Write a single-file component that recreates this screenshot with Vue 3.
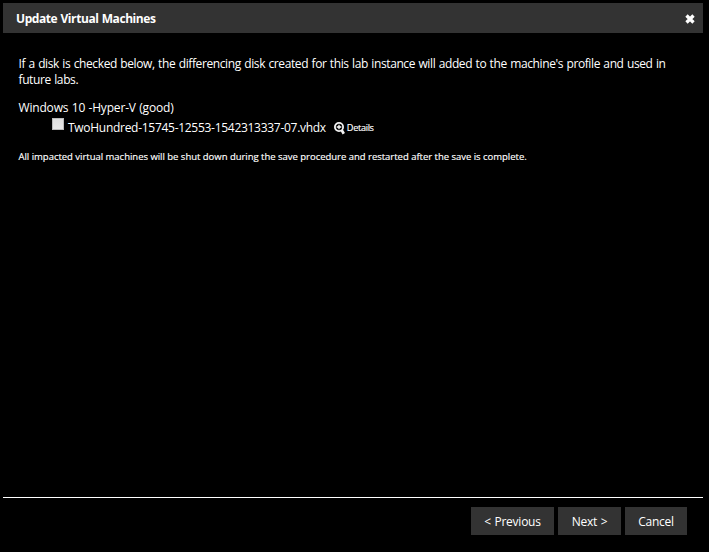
<script setup>
import { ref } from 'vue'

const checked = ref(false)
</script>

<template>
  <main class="dialog">
    <header class="titlebar">
      <h1 class="title">Update Virtual Machines</h1>
      <button class="close" aria-label="Close">
        <svg width="10" height="10" viewBox="0 0 10 10">
          <path d="M1.5 1.5 8.5 8.5M8.5 1.5 1.5 8.5" fill="none" stroke="#fff" stroke-width="3.3" />
        </svg>
      </button>
    </header>
    <section class="content">
      <p class="intro">If a disk is checked below, the differencing disk created for this lab instance will added to the machine's profile and used in<br />future labs.</p>
      <div class="machine">Windows 10 -Hyper-V (good)</div>
      <div class="disk">
        <input v-model="checked" class="check" type="checkbox" aria-label="Save disk" />
        <span class="filename">TwoHundred-15745-12553-1542313337-07.vhdx</span>
        <a class="details">
          <svg width="12" height="13" viewBox="0 0 12 13">
            <circle cx="5" cy="5" r="4.1" fill="none" stroke="#f2f2f2" stroke-width="1.8" />
            <path d="M5 2.7V7.3M2.7 5H7.3" stroke="#fff" stroke-width="1.3" />
            <path d="M7.6 8 9.8 11.8" stroke="#f2f2f2" stroke-width="2.7" />
          </svg>
          <span class="details-text">Details</span>
        </a>
      </div>
      <p class="note">All impacted virtual machines will be shut down during the save procedure and restarted after the save is complete.</p>
    </section>
    <footer class="footer">
      <button class="btn previous">&lt; Previous</button>
      <button class="btn next">Next &gt;</button>
      <button class="btn cancel">Cancel</button>
    </footer>
  </main>
</template>

<style>
body {
  background: #000;
}
</style>

<style scoped>
.dialog {
  box-sizing: border-box;
  height: 552px;
  padding: 3px 6px 0 3px;
  display: flex;
  flex-direction: column;
  overflow: hidden;
  background: #000;
  color: #fff;
  font: 12px/16px "Open Sans", "Noto Sans", sans-serif;
  white-space: nowrap;
}
.titlebar {
  height: 30px;
  box-sizing: border-box;
  padding: 0 8px 0 13px;
  display: flex;
  align-items: center;
  justify-content: space-between;
  background: #333;
}
.title {
  margin: 0;
  padding-top: 2px;
  font-size: 12px;
  font-weight: 700;
  letter-spacing: -0.42px;
  word-spacing: 0.5px;
}
.close {
  display: flex;
  padding: 1px 0 0;
  border: 0;
  background: none;
}
.content {
  flex: 1;
  padding: 23px 15px 0;
}
.intro {
  margin: 0 0 12px;
  padding-left: 0.5px;
  letter-spacing: -0.39px;
  word-spacing: 0.65px;
}
.machine {
  padding-left: 0.5px;
  letter-spacing: -0.18px;
  word-spacing: 0.5px;
}
.disk {
  height: 22px;
  padding-left: 34px;
  display: flex;
  align-items: center;
}
.check {
  appearance: none;
  box-sizing: border-box;
  width: 12px;
  height: 12px;
  margin: 0 4px 6px 0;
  border: 1px solid #bababa;
  background: linear-gradient(#dedede, #e8e8e8);
}
.check:checked {
  background: #555;
}
.filename {
  padding-top: 2px;
  letter-spacing: -0.285px;
}
.details {
  margin-left: 8px;
  padding-top: 2px;
  display: flex;
  align-items: center;
  gap: 1px;
}
.details-text {
  font-size: 9.2px;
  letter-spacing: -0.35px;
  -webkit-text-stroke: 0.15px #fff;
}
.note {
  margin: 11px 0 0;
  padding-left: 0.5px;
  font-size: 9.5px;
  letter-spacing: -0.02px;
  -webkit-text-stroke: 0.15px #fff;
}
.footer {
  height: 55px;
  box-sizing: border-box;
  padding: 9px 16px 0 0;
  border-top: 1px solid #fff;
  display: flex;
  justify-content: flex-end;
  gap: 4px;
}
.btn {
  height: 28px;
  padding: 2px 0 0;
  border: 0;
  background: #333;
  color: #fff;
  font: inherit;
  letter-spacing: -0.25px;
  word-spacing: 0.7px;
}
.previous {
  width: 83px;
}
.next {
  width: 63px;
}
.cancel {
  width: 62px;
}
</style>
